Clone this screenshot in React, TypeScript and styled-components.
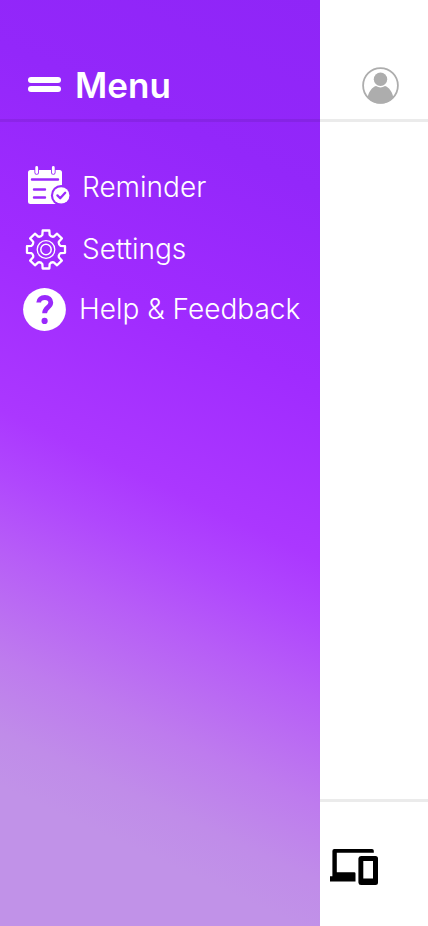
import React from "react";
import styled, { createGlobalStyle } from "styled-components";

const GlobalStyle = createGlobalStyle`
  *, *::before, *::after { box-sizing: border-box; }
  body {
    margin: 0;
    background: #fff;
    font-family: "Inter", "Liberation Sans", sans-serif;
  }
`;

const line = "rgba(0, 0, 0, 0.08)";

const Page = styled.div`
  display: flex;
  min-height: 100vh;
`;

const Drawer = styled.aside`
  flex: 0 0 320px;
  color: #fff;
  background: linear-gradient(
    205deg,
    #8f25f7 0%,
    #9327fa 18%,
    #a02bff 36%,
    #ab37ff 52%,
    #b047fd 58%,
    #b75df7 65%,
    #be7bee 75%,
    #c08ce9 82%,
    #c192e8 87%
  );
`;

const Main = styled.div`
  flex: 1;
  min-width: 0;
  display: flex;
  flex-direction: column;
`;

const Bar = styled.header<{ $end?: boolean }>`
  display: flex;
  align-items: center;
  justify-content: ${(p) => (p.$end ? "flex-end" : "flex-start")};
  gap: 14px;
  height: 122px;
  padding: 50px 28px 0;
  border-bottom: 3px solid ${line};
`;

const Content = styled.main`
  flex: 1;
`;

const Footer = styled.footer`
  display: flex;
  align-items: center;
  height: 127px;
  padding: 6px 10px 0;
  border-top: 3px solid ${line};
`;

const IconButton = styled.button`
  display: flex;
  padding: 0;
  border: 0;
  background: none;
  color: inherit;
  cursor: pointer;
`;

const Title = styled.h1`
  margin: 0;
  font-size: 35px;
  line-height: 44px;
  font-weight: 600;
`;

const Items = styled.ul`
  margin: 0;
  padding: 33px 0 0;
  list-style: none;
`;

const Item = styled.li<{ $tall?: boolean }>`
  display: flex;
  align-items: center;
  height: ${(p) => (p.$tall ? 64 : 60)}px;
  padding-left: 23px;
`;

const ItemLink = styled.a`
  display: flex;
  align-items: center;
  gap: 12px;
  color: inherit;
  font-size: 28px;
  line-height: 32px;
  font-weight: 300;
  text-decoration: none;
  white-space: nowrap;
`;

const Icon = styled.svg`
  display: block;
  flex: none;
`;

const purple = "#9a29fc";

function gearPath(cx: number, cy: number) {
  const point = (r: number, degrees: number) => {
    const a = (degrees * Math.PI) / 180;
    return `${(cx + r * Math.sin(a)).toFixed(2)} ${(cy - r * Math.cos(a)).toFixed(2)}`;
  };
  let d = "";
  for (let i = 0; i < 8; i++) {
    const a = i * 45;
    d += `${i ? "L" : "M"}${point(15, a - 14)}L${point(19.3, a - 10)}L${point(19.3, a + 10)}L${point(15, a + 14)}`;
    d += `Q${point(13.4, a + 22.5)} ${point(15, a + 31)}`;
  }
  return d + "Z";
}

const BarsIcon = () => (
  <Icon width="33" height="15" viewBox="0 0 33 15" fill="currentColor" aria-hidden="true">
    <rect width="33" height="6" rx="3" />
    <rect y="9" width="33" height="6" rx="3" />
  </Icon>
);

const ReminderIcon = () => (
  <Icon width="47" height="48" viewBox="0 1 47 48" fill="none" strokeLinecap="round" aria-hidden="true">
    <rect x="5" y="8" width="34" height="34" rx="2.5" fill="#fff" />
    <path d="M13.7 7v3.5M30.3 7v3.5" stroke={purple} strokeWidth="4.6" />
    <path d="M13.7 5.5v5M30.3 5.5v5" stroke="#fff" strokeWidth="2.8" />
    <path d="M9 17.5h26M11 27.5h11M11 35.5h11" stroke={purple} strokeWidth="2.4" />
    <circle cx="38.2" cy="33.4" r="10.3" fill={purple} />
    <circle cx="38.2" cy="33.4" r="8.2" fill="#fff" />
    <path d="M34.4 33.4l2.8 2.8 5-5.4" stroke={purple} strokeWidth="2.3" strokeLinejoin="round" />
  </Icon>
);

const SettingsIcon = () => (
  <Icon width="47" height="48" viewBox="0 0 47 48" fill="none" stroke="#fff" aria-hidden="true">
    <path d={gearPath(23, 24.5)} strokeWidth="2.3" strokeLinejoin="round" />
    <circle cx="23" cy="24.5" r="8.8" strokeWidth="1.3" />
    <circle cx="23" cy="24.5" r="5.2" strokeWidth="1.5" />
  </Icon>
);

const HelpIcon = () => (
  <Icon width="44" height="48" viewBox="0 0 44 48" fill="none" aria-hidden="true">
    <circle cx="21.5" cy="24.5" r="21.4" fill="#fff" />
    <path
      d="M15.7 17.6C15.7 14.3 18.3 12.5 21.9 12.5c3.5 0 5.9 2 5.9 5.1 0 4.9-6.2 4.9-6.2 10.6"
      stroke={purple}
      strokeWidth="4.8"
    />
    <circle cx="21.6" cy="35.9" r="3.1" fill={purple} />
  </Icon>
);

const UserIcon = () => (
  <Icon width="38" height="38" viewBox="0 0 38 38" fill="#adadad" aria-hidden="true">
    <circle cx="18.5" cy="19.5" r="17.4" fill="none" stroke="#adadad" strokeWidth="1.8" />
    <circle cx="18.5" cy="13.2" r="6.7" />
    <path d="M5.7 31C6.9 25.5 10.1 21.4 14 20.1c2.8 1.9 6.2 1.9 9 0 3.9 1.3 7.1 5.4 8.3 10.9-3 4.2-7.6 6.6-12.8 6.6S8.7 35.2 5.7 31z" />
  </Icon>
);

const DevicesIcon = () => (
  <Icon width="48" height="36" viewBox="0 0 48 36" fill="#000" aria-hidden="true">
    <path d="M4.3 0H42a1.8 1.8 0 0 1 1.8 1.8V3.8H6.8V23.2H24.2a1.3 1.3 0 0 1 1.3 1.3V32.6H0V27.2H2.4V2Q2.4 0 4.3 0z" />
    <path
      fillRule="evenodd"
      d="M31 7H45.500a2.500 2.500 0 0 1 2.500 2.500V33.500a2.500 2.500 0 0 1-2.500 2.500H31a2.600 2.600 0 0 1-2.600-2.500V9.500A2.600 2.600 0 0 1 31 7zM33.300 12V29.400H43V12z"
    />
  </Icon>
);

const items = [
  { label: "Reminder", icon: <ReminderIcon />, tall: true },
  { label: "Settings", icon: <SettingsIcon />, tall: false },
  { label: "Help & Feedback", icon: <HelpIcon />, tall: false },
];

export default function App() {
  return (
    <>
      <GlobalStyle />
      <Page>
        <Drawer>
          <Bar>
            <IconButton type="button" aria-label="Close menu">
              <BarsIcon />
            </IconButton>
            <Title>Menu</Title>
          </Bar>
          <nav aria-label="Menu">
            <Items>
              {items.map((item) => (
                <Item key={item.label} $tall={item.tall}>
                  <ItemLink href="#">
                    {item.icon}
                    {item.label}
                  </ItemLink>
                </Item>
              ))}
            </Items>
          </nav>
        </Drawer>
        <Main>
          <Bar $end>
            <IconButton type="button" aria-label="Account">
              <UserIcon />
            </IconButton>
          </Bar>
          <Content />
          <Footer>
            <IconButton type="button" aria-label="Devices">
              <DevicesIcon />
            </IconButton>
          </Footer>
        </Main>
      </Page>
    </>
  );
}
